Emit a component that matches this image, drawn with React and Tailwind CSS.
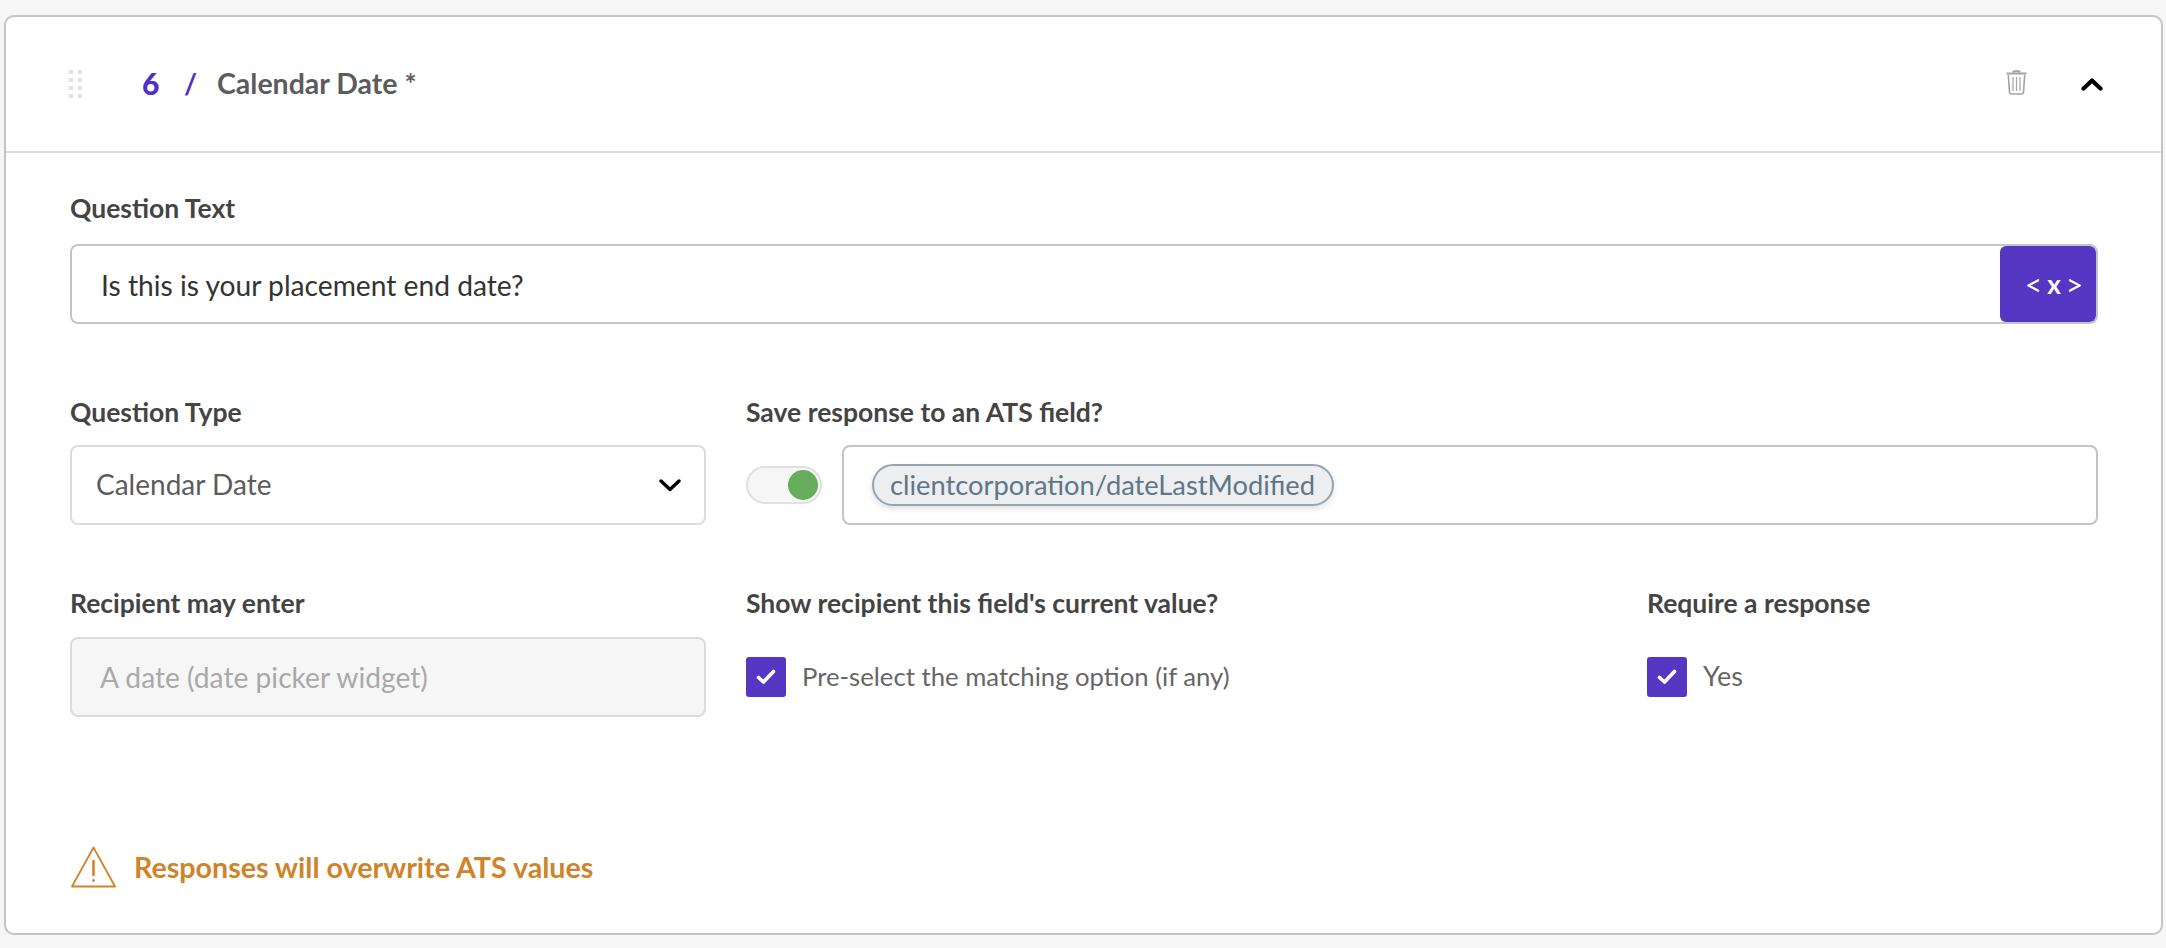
import React from "react";

function Label({ children, className = "" }) {
  return <div className={`h-[30px] flex items-center text-[26.5px] font-bold text-[#444444] whitespace-nowrap ${className}`}>{children}</div>;
}

function Check() {
  return (
    <span className="w-[40px] h-[40px] rounded-[3px] bg-[#5637c4] flex items-center justify-center shrink-0">
      <svg width="20" height="16" viewBox="0 0 20 16" fill="none">
        <path d="M2.5 8.5 L7.5 13 L17.5 2.5" stroke="#fff" strokeWidth="3.6" strokeLinecap="round" strokeLinejoin="round" />
      </svg>
    </span>
  );
}

function Grip() {
  return (
    <div className="grid grid-cols-2 gap-x-[5px] gap-y-[4px] w-[13px] ml-[63px]">
      {[0,1,2,3,4,5,6,7].map((i) => <span key={i} className="w-[4px] h-[4px] bg-[#e2e2e2]" />)}
    </div>
  );
}

export default function App() {
  return (
    <div className="w-full h-[948px] bg-[#f6f6f6] pt-[15px] pl-[4px] pr-[3px] font-['Lato','Open_Sans',sans-serif]">
      <div className="w-full h-[920px] bg-white border-2 border-[#c4c4c4] rounded-[10px] overflow-hidden flex flex-col">
        <div className="h-[136px] border-b-2 border-[#dddddd] flex items-center shrink-0">
          <Grip />
          <span className="ml-[60px] -mt-[2px] text-[30px] font-black text-[#5030c8] w-[19px]">6</span>
          <span className="ml-[23px] -mt-[2px] text-[28px] text-[#5030c8] font-bold w-[12px]">/</span>
          <span className="ml-[21px] -mt-[2px] text-[28.5px] font-bold text-[#5c5c5c] whitespace-nowrap">Calendar Date *</span>
          <div className="ml-auto flex items-center">
            <svg width="23" height="26" viewBox="0 0 22 26" fill="none" stroke="#a3a3a3" strokeWidth="1.6" className="-mt-[5px]">
              <path d="M1 4.5H21" strokeWidth="2" />
              <path d="M7.5 3.5C8 1.5 14 1.5 14.5 3.5" strokeWidth="2" />
              <path d="M2.8 6L4 23.5C4.1 24.5 4.8 25 5.8 25H16.2C17.2 25 17.9 24.5 18 23.5L19.2 6" />
              <path d="M7.5 8V22M11 8V22M14.5 8V22" strokeWidth="1.2" />
            </svg>
            <svg className="ml-[53px] mr-[58px]" width="22" height="14" viewBox="0 0 22 14" fill="none">
              <path d="M2.5 11.5L11 3.5L19.5 11.5" stroke="#000" strokeWidth="4.2" strokeLinecap="round" strokeLinejoin="round" />
            </svg>
          </div>
        </div>

        <div className="flex-1 pl-[64px] pr-[63px] pt-[41px] flex flex-col">
          <Label>Question Text</Label>
          <div className="mt-[20px] h-[80px] border-2 border-[#c4c4c4] rounded-[8px] flex items-center overflow-hidden">
            <span className="flex-1 pl-[29px] pt-[2px] text-[28.2px] text-[#333333] whitespace-nowrap">Is this is your placement end date?</span>
            <span className="w-[96px] h-full rounded-[6px] bg-[#5637c4] text-white text-[26px] font-bold flex items-center justify-center pl-[12px] gap-[5px]">
              <span className="font-normal text-[30px] leading-none">&lt;</span><span>x</span><span className="font-normal text-[30px] leading-none">&gt;</span>
            </span>
          </div>

          <div className="grid grid-cols-[636px_1fr] gap-x-[40px] mt-[74px]">
            <Label>Question Type</Label>
            <Label>Save response to an ATS field?</Label>
            <div className="mt-[17px] h-[80px] border-2 border-[#dcdcdc] rounded-[8px] flex items-center justify-between pl-[24px] pr-[22px]">
              <span className="text-[28px] text-[#5c5c5c] -mt-[2px]">Calendar Date</span>
              <svg width="22" height="14" viewBox="0 0 22 14" fill="none" className="mr-[1px]">
                <path d="M2 3L11 11.5L20 3" stroke="#000" strokeWidth="3.4" strokeLinecap="round" strokeLinejoin="round" />
              </svg>
            </div>
            <div className="mt-[17px] h-[80px] flex items-center gap-[20px]">
              <div className="w-[76px] h-[38px] rounded-full border-2 border-[#e0e0e0] bg-[#f6f6f6] flex items-center justify-end pr-[2px] shrink-0">
                <span className="w-[30px] h-[30px] rounded-full bg-[#66ad5c]" />
              </div>
              <div className="flex-1 h-full border-2 border-[#c4c4c4] rounded-[8px] flex items-center pl-[28px]">
                <span className="h-[42px] pl-[16px] pr-[17px] rounded-full border-2 border-[#93a5b1] bg-[#eceef0] shadow-[0_3px_6px_rgba(0,0,0,0.12)] text-[27.3px] text-[#5f7688] flex items-center whitespace-nowrap">clientcorporation/dateLastModified</span>
              </div>
            </div>
          </div>

          <div className="grid grid-cols-[636px_861px_1fr] gap-x-[40px] mt-[64px]">
            <Label>Recipient may enter</Label>
            <Label>Show recipient this field's current value?</Label>
            <Label>Require a response</Label>
            <div className="mt-[18px] h-[80px] border-2 border-[#dcdcdc] rounded-[8px] bg-[#f6f6f6] flex items-center pl-[28px]">
              <span className="text-[28.2px] text-[#a9a9a9] whitespace-nowrap">A date (date picker widget)</span>
            </div>
            <div className="mt-[18px] h-[80px] flex items-center gap-[16px]">
              <Check />
              <span className="text-[25.7px] text-[#666666] whitespace-nowrap -mt-[1px]">Pre-select the matching option (if any)</span>
            </div>
            <div className="mt-[18px] h-[80px] flex items-center gap-[16px]">
              <Check />
              <span className="text-[27px] text-[#666666] -mt-[1px]">Yes</span>
            </div>
          </div>

          <div className="mt-[129px] flex items-center gap-[18px]">
            <svg width="45" height="42" viewBox="0 0 45 42" fill="none" stroke="#cf842b" className="ml-[1px]">
              <path d="M22.5 1.5L44 40.5H1Z" strokeWidth="1.8" strokeLinejoin="round" />
              <path d="M22.5 15V29" strokeWidth="2.6" strokeLinecap="round" />
              <circle cx="22.5" cy="34.5" r="1.4" fill="#cf842b" stroke="none" />
            </svg>
            <span className="text-[28.65px] font-bold text-[#cf842b] whitespace-nowrap">Responses will overwrite ATS values</span>
          </div>
        </div>
      </div>
    </div>
  );
}
